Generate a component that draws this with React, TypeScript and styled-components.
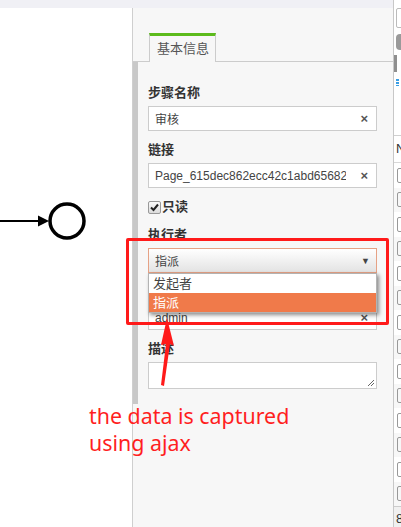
import * as React from "react";
import styled, { createGlobalStyle } from "styled-components";

const GlobalStyle = createGlobalStyle`
  html, body {
    margin: 0;
    padding: 0;
  }
  body {
    width: 401px;
    height: 527px;
    overflow: hidden;
    font-family: "Liberation Sans", "Noto Sans CJK SC", sans-serif;
    font-size: 13px;
    color: #333;
    background: #fff;
  }
`;

const fields = [
  { label: "步骤名称", value: "审核" },
  { label: "链接", value: "Page_615dec862ecc42c1abd65682" },
];

const listRows = Array.from({ length: 14 }, (_, i) => i);

const App: React.FC = () => {
  return (
    <Page>
      <GlobalStyle />
      <Main>
        <TopBar />
        <Body>
          <Canvas>
            <svg width="132" height="519" viewBox="0 8 132 519">
              <line x1="0" y1="221" x2="40" y2="221" stroke="#000" strokeWidth="2" />
              <polygon points="38,215.5 49,221 38,226.5" fill="#000" />
              <circle cx="67" cy="221" r="17" fill="none" stroke="#000" strokeWidth="3.5" />
            </svg>
          </Canvas>
          <Panel>
            <ScrollThumb />
            <TabBar>
              <Tab>基本信息</Tab>
            </TabBar>
            <Form>
              {fields.map((f) => (
                <Field key={f.label}>
                  <Label>{f.label}</Label>
                  <Input>
                    <InputText>{f.value}</InputText>
                    <Clear>×</Clear>
                  </Input>
                </Field>
              ))}
              <CheckRow>
                <CheckBox>
                  <svg width="9" height="9" viewBox="0 0 9 9">
                    <path d="M1 4.5 L3.5 7 L8 1.5" fill="none" stroke="#222" strokeWidth="2" />
                  </svg>
                </CheckBox>
                <Label>只读</Label>
              </CheckRow>
              <Field>
                <Label>执行者</Label>
                <SelectWrap>
                  <Select>
                    <InputText>指派</InputText>
                    <Caret>▼</Caret>
                  </Select>
                  <Dropdown>
                    <Option>发起者</Option>
                    <Option $active>指派</Option>
                  </Dropdown>
                </SelectWrap>
              </Field>
              <Field>
                <Label />
                <Input>
                  <InputText>admin</InputText>
                  <Clear>×</Clear>
                </Input>
              </Field>
              <Field>
                <Label>描述</Label>
                <TextArea>
                  <svg width="8" height="8" viewBox="0 0 8 8">
                    <path d="M1 7 L7 1 M4 7 L7 4" stroke="#666" strokeWidth="1" />
                  </svg>
                </TextArea>
              </Field>
            </Form>
          </Panel>
        </Body>
      </Main>
      <SideStrip>
        <SideTools>
          <SideBox />
          <SidePill />
          <SideScroll />
          <SideDots />
        </SideTools>
        <SideHead>N</SideHead>
        {listRows.map((i) => (
          <SideRow key={i} $odd={i % 2 === 1}>
            <SideCheck />
          </SideRow>
        ))}
        <SideFoot>8</SideFoot>
      </SideStrip>

      <Highlight />
      <Arrow width="20" height="70" viewBox="0 0 20 70">
        <polygon points="9,0 16,28 12,26 6,68 3,67 8,26 3,27" fill="#ff1a1a" />
      </Arrow>
      <Note>
        the data is captured
        <br />
        using ajax
      </Note>
    </Page>
  );
};

export default App;

const Page = styled.div`
  position: relative;
  display: flex;
  width: 401px;
  height: 527px;
`;

const Main = styled.div`
  display: flex;
  flex-direction: column;
  flex: 0 0 393px;
  width: 393px;
  min-width: 0;
`;

const TopBar = styled.div`
  height: 8px;
  background: #f0f0f5;
`;

const Body = styled.div`
  flex: 1;
  display: flex;
  min-width: 0;
`;

const Canvas = styled.div`
  flex: 0 0 132px;
  background: #fff;

  svg {
    display: block;
  }
`;

const Panel = styled.div`
  position: relative;
  flex: 1;
  min-width: 0;
  background: #f7f7f7;
  border-left: 1px solid #cfcfcf;
  padding-top: 25px;
`;

const ScrollThumb = styled.div`
  position: absolute;
  left: 0;
  top: 54px;
  width: 5px;
  height: 342px;
  background: #c8c8c8;
`;

const TabBar = styled.div`
  display: flex;
  padding-left: 16px;
  border-bottom: 1px solid #cccccc;
`;

const Tab = styled.div`
  height: 26px;
  line-height: 26px;
  padding: 0 6px 0 7px;
  margin-bottom: -1px;
  background: #f7f7f7;
  border: 1px solid #cccccc;
  border-top: 3px solid #5cbb1c;
  border-bottom: none;
  color: #555;
  font-size: 13px;
`;

const Form = styled.div`
  display: flex;
  flex-direction: column;
  gap: 10px;
  padding: 22px 16px 0 15px;
`;

const Field = styled.div`
  display: flex;
  flex-direction: column;
  gap: 4px;
`;

const Label = styled.div`
  height: 18px;
  line-height: 18px;
  font-size: 13px;
  font-weight: bold;
  color: #333;
`;

const Input = styled.div`
  display: flex;
  align-items: center;
  height: 23px;
  padding: 0 8px 0 6px;
  background: #fff;
  border: 1px solid #cccccc;
`;

const InputText = styled.span`
  flex: 1;
  min-width: 0;
  overflow: hidden;
  white-space: nowrap;
  font-size: 12px;
  color: #444;
  margin-right: 14px;
`;

const Clear = styled.span`
  font-size: 13px;
  font-weight: bold;
  color: #555;
`;

const CheckRow = styled.div`
  display: flex;
  align-items: center;
  gap: 1px;
  height: 18px;
`;

const CheckBox = styled.div`
  display: flex;
  align-items: center;
  justify-content: center;
  width: 11px;
  height: 11px;
  border: 1px solid #999;
  border-radius: 2px;
  background: linear-gradient(#fafafa, #dcdcdc);
`;

const SelectWrap = styled.div`
  position: relative;
`;

const Select = styled.div`
  display: flex;
  align-items: center;
  height: 23px;
  padding: 0 6px;
  border: 1px solid #e6a285;
  background: linear-gradient(#ffffff, #e3e3e3);
`;

const Caret = styled.span`
  font-size: 9px;
  color: #444;
`;

const Dropdown = styled.div`
  position: absolute;
  left: 0;
  right: 0;
  top: 25px;
  z-index: 2;
  background: #fff;
  border: 1px solid #b3b3b3;
  box-shadow: 2px 2px 4px rgba(0, 0, 0, 0.45);
`;

const Option = styled.div<{ $active?: boolean }>`
  height: 19px;
  line-height: 19px;
  padding: 0 4px;
  font-size: 13px;
  color: ${(p) => (p.$active ? "#fff" : "#444")};
  background: ${(p) => (p.$active ? "#f07a4a" : "#fff")};
`;

const TextArea = styled.div`
  display: flex;
  align-items: flex-end;
  justify-content: flex-end;
  height: 23px;
  padding: 1px;
  background: #fff;
  border: 1px solid #cccccc;
`;

const SideStrip = styled.div`
  display: flex;
  flex-direction: column;
  flex: 0 0 8px;
  box-sizing: border-box;
  border-left: 1px solid #c8c8c8;
  background: #fff;
  overflow: hidden;
`;

const SideTools = styled.div`
  position: relative;
  flex-shrink: 0;
  height: 135px;
  border-bottom: 1px solid #d0d0d0;
`;

const SideBox = styled.div`
  position: absolute;
  left: 2px;
  top: 8px;
  width: 10px;
  height: 18px;
  border: 1px solid #bbb;
  border-radius: 2px;
`;

const SidePill = styled.div`
  position: absolute;
  left: 2px;
  top: 34px;
  width: 10px;
  height: 16px;
  border-radius: 4px;
  background: #9a9a9a;
`;

const SideScroll = styled.div`
  position: absolute;
  left: 0;
  top: 55px;
  width: 3px;
  height: 17px;
  background: #8f8f8f;
`;

const SideDots = styled.div`
  position: absolute;
  left: 2px;
  top: 79px;
  width: 3px;
  height: 7px;
  background: repeating-linear-gradient(#3a9ee4 0 2px, transparent 2px 3px);
`;

const SideHead = styled.div`
  flex-shrink: 0;
  height: 26px;
  line-height: 26px;
  padding-left: 2px;
  font-size: 13px;
  color: #333;
  overflow: hidden;
  border-bottom: 1px solid #d8d8d8;
`;

const SideRow = styled.div<{ $odd: boolean }>`
  display: flex;
  align-items: center;
  height: 24.5px;
  flex-shrink: 0;
  padding-left: 3px;
  background: ${(p) => (p.$odd ? "#f7f7f7" : "#fff")};
`;

const SideCheck = styled.div`
  flex-shrink: 0;
  width: 10px;
  height: 13px;
  border: 1px solid #999;
  border-radius: 2px;
`;

const SideFoot = styled.div`
  flex: 1;
  padding-left: 2px;
  padding-top: 4px;
  background: #f0f0f0;
  border-top: 1px solid #ccc;
  font-size: 13px;
  color: #333;
  overflow: hidden;
`;

const Highlight = styled.div`
  position: absolute;
  left: 126px;
  top: 238px;
  width: 257px;
  height: 81px;
  border: 3px solid #ff1a1a;
  border-radius: 2px;
  z-index: 3;
`;

const Arrow = styled.svg`
  position: absolute;
  left: 158px;
  top: 318px;
  z-index: 3;
`;

const Note = styled.div`
  position: absolute;
  left: 89px;
  top: 402px;
  z-index: 3;
  font-family: "Noto Sans", "Open Sans", sans-serif;
  font-size: 21.4px;
  line-height: 27px;
  color: #ff1f1f;
`;
